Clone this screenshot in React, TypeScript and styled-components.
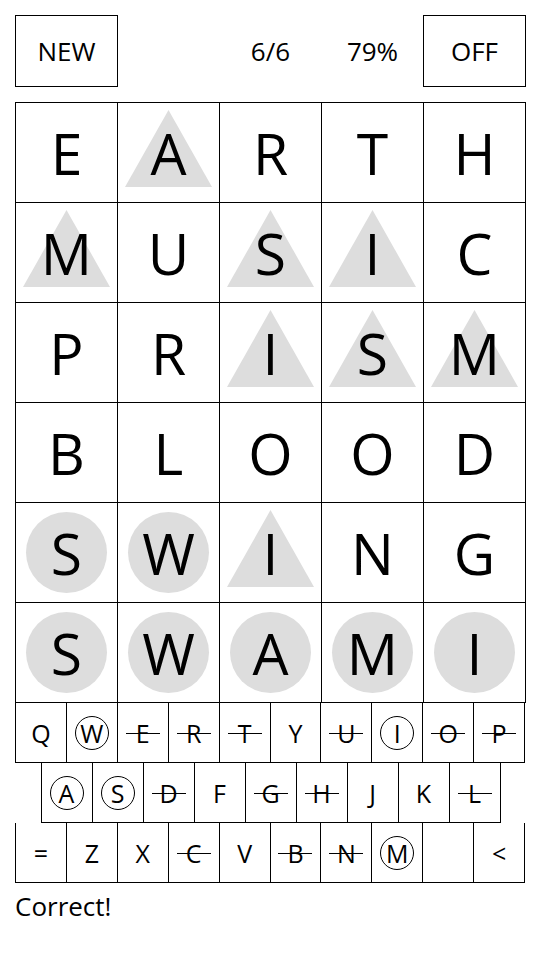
import React from 'react';
import styled, { createGlobalStyle } from 'styled-components';

type Mark = 'none' | 'tri' | 'circ';
type KeyMark = 'none' | 'ring' | 'strike';

const GlobalStyle = createGlobalStyle`
  html, body {
    margin: 0;
    padding: 0;
    background: #ffffff;
  }
  body {
    font-family: "Open Sans", "Noto Sans", sans-serif;
    color: #000000;
  }
`;

const board: [string, Mark][][] = [
  [['E', 'none'], ['A', 'tri'], ['R', 'none'], ['T', 'none'], ['H', 'none']],
  [['M', 'tri'], ['U', 'none'], ['S', 'tri'], ['I', 'tri'], ['C', 'none']],
  [['P', 'none'], ['R', 'none'], ['I', 'tri'], ['S', 'tri'], ['M', 'tri']],
  [['B', 'none'], ['L', 'none'], ['O', 'none'], ['O', 'none'], ['D', 'none']],
  [['S', 'circ'], ['W', 'circ'], ['I', 'tri'], ['N', 'none'], ['G', 'none']],
  [['S', 'circ'], ['W', 'circ'], ['A', 'circ'], ['M', 'circ'], ['I', 'circ']],
];

const keyRows: { offset: number; keys: [string, KeyMark][] }[] = [
  {
    offset: 0,
    keys: [['Q', 'none'], ['W', 'ring'], ['E', 'strike'], ['R', 'strike'], ['T', 'strike'],
      ['Y', 'none'], ['U', 'strike'], ['I', 'ring'], ['O', 'strike'], ['P', 'strike']],
  },
  {
    offset: 25.5,
    keys: [['A', 'ring'], ['S', 'ring'], ['D', 'strike'], ['F', 'none'], ['G', 'strike'],
      ['H', 'strike'], ['J', 'none'], ['K', 'none'], ['L', 'strike']],
  },
  {
    offset: 0,
    keys: [['=', 'none'], ['Z', 'none'], ['X', 'none'], ['C', 'strike'], ['V', 'none'],
      ['B', 'strike'], ['N', 'strike'], ['M', 'ring'], ['', 'none'], ['<', 'none']],
  },
];

function App() {
  return (
    <Page>
      <GlobalStyle />
      <Header>
        <HeaderButton>NEW</HeaderButton>
        <HeaderSlot />
        <HeaderStat>6/6</HeaderStat>
        <HeaderStat>79%</HeaderStat>
        <HeaderButton>OFF</HeaderButton>
      </Header>

      <Board>
        {board.map((row, r) =>
          row.map(([letter, mark], c) => (
            <Cell key={`cell-${r}-${c}`}>
              {mark !== 'none' && <Shape mark={mark} />}
              <Letter>{letter}</Letter>
            </Cell>
          ))
        )}
      </Board>

      <Keyboard>
        {keyRows.map((row, r) => (
          <KeyRow key={`krow-${r}`} offset={row.offset}>
            {row.keys.map(([label, mark], k) => (
              <Key key={`key-${r}-${k}`}>
                <KeyFace mark={mark}>{label}</KeyFace>
              </Key>
            ))}
          </KeyRow>
        ))}
      </Keyboard>

      <Status>Correct!</Status>
    </Page>
  );
}

const Page = styled.div`
  padding: 15px;
  width: 540px;
  box-sizing: border-box;
`;

const Header = styled.div`
  display: grid;
  grid-template-columns: repeat(5, 102px);
  height: 72px;
  margin-bottom: 15px;
`;

const HeaderButton = styled.div`
  width: 103px;
  box-sizing: border-box;
  border: 1px solid #000000;
  display: flex;
  align-items: center;
  justify-content: center;
  font-size: 26px;
`;

const HeaderSlot = styled.div``;

const HeaderStat = styled.div`
  display: flex;
  align-items: center;
  justify-content: center;
  font-size: 26px;
  padding-left: 1px;
`;

const Board = styled.div`
  display: grid;
  grid-template-columns: repeat(5, 102px);
  grid-auto-rows: 100px;
  width: 511px;
  box-sizing: border-box;
  border-top: 1px solid #000000;
  border-left: 1px solid #000000;
`;

const Cell = styled.div`
  display: grid;
  place-items: center;
  border-right: 1px solid #000000;
  border-bottom: 1px solid #000000;
  & > * {
    grid-area: 1 / 1;
  }
`;

const Shape = styled.div<{ mark: Mark }>`
  background: #dddddd;
  width: ${({ mark }) => (mark === 'tri' ? '87px' : '81px')};
  height: ${({ mark }) => (mark === 'tri' ? '77px' : '81px')};
  border-radius: ${({ mark }) => (mark === 'circ' ? '50%' : '0')};
  clip-path: ${({ mark }) => (mark === 'tri' ? 'polygon(50% 0, 100% 100%, 0 100%)' : 'none')};
  margin-top: ${({ mark }) => (mark === 'tri' ? '-8px' : '0')};
`;

const Letter = styled.div`
  font-size: 57px;
  line-height: 1;
  position: relative;
  margin-top: 1px;
`;

const Keyboard = styled.div`
  display: flex;
  flex-direction: column;
`;

const KeyRow = styled.div<{ offset: number }>`
  display: flex;
  margin-left: ${({ offset }) => offset}px;
  & > div:first-child {
    border-left: 1px solid #000000;
  }
`;

const Key = styled.div`
  width: 51px;
  height: 60px;
  box-sizing: border-box;
  border-right: 1px solid #000000;
  border-bottom: 1px solid #000000;
  display: flex;
  align-items: center;
  justify-content: center;
  &:first-child {
    width: 52px;
  }
`;

const KeyFace = styled.div<{ mark: KeyMark }>`
  position: relative;
  width: 34px;
  height: 34px;
  box-sizing: border-box;
  display: flex;
  align-items: center;
  justify-content: center;
  font-size: 25px;
  border-radius: 50%;
  border: ${({ mark }) => (mark === 'ring' ? '1px solid #000000' : 'none')};
  &::after {
    content: '';
    display: ${({ mark }) => (mark === 'strike' ? 'block' : 'none')};
    position: absolute;
    left: 0;
    right: 0;
    top: 50%;
    border-top: 1px solid #000000;
  }
`;

const Status = styled.div`
  font-size: 26px;
  margin-top: 5px;
`;

export default App;
